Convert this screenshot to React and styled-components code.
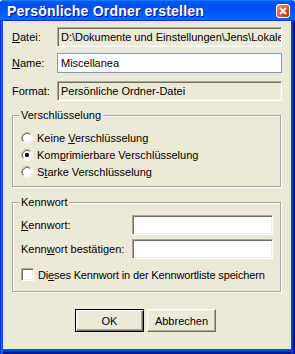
import React from 'react';
import styled, { createGlobalStyle } from 'styled-components';

const GlobalStyle = createGlobalStyle`
  html, body {
    margin: 0;
    padding: 0;
    background: #fff;
  }
  body {
    font-family: "Liberation Sans", Arial, sans-serif;
    font-size: 11px;
    color: #000;
  }
`;

const Window = styled.div`
  width: 295px;
  height: 354px;
  display: flex;
  flex-direction: column;
  overflow: hidden;
`;

const TitleBar = styled.div`
  flex: none;
  height: 21px;
  box-sizing: border-box;
  display: flex;
  align-items: center;
  justify-content: space-between;
  padding: 0 5px 0 7px;
  border-radius: 3px 3px 0 0;
  background: linear-gradient(180deg, #0997ff, #0053ee 8%, #0050ee 40%, #0066ff 88%, #0066ff 93%, #005bff 95%, #003dd7 96%, #003dd7);
`;

const Title = styled.span`
  font-family: "Liberation Sans", Arial, sans-serif;
  font-weight: bold;
  font-size: 14px;
  letter-spacing: 0.2px;
  color: #fff;
  text-shadow: 1px 1px #0f1089;
  margin-top: 1px;
`;

const CloseButton = styled.div`
  width: 14px;
  height: 14px;
  box-sizing: border-box;
  border: 1px solid #fff;
  border-radius: 3px;
  background: radial-gradient(circle at 85% 85%, #c2350b 0, #dc5a2c 50%, #e8794f 75%, #f6b49a 100%);
  display: flex;
  align-items: center;
  justify-content: center;
`;

const Body = styled.div`
  flex: 1;
  background: #ece9d8;
  padding: 6px 9px 0 12px;
  display: flex;
  flex-direction: column;
  box-shadow:
    inset 1px 0 #0831d9, inset 2px 0 #166aee, inset 3px 0 #0855dd,
    inset -1px 0 #00138c, inset -2px 0 #001ea0, inset -3px 0 #003bda, inset -4px 0 #0046dc,
    inset 0 -1px #00138c, inset 0 -2px #001ea0, inset 0 -3px #003bda, inset 0 -4px #0046dc, inset 0 -5px #0055e5;
`;

const FieldRow = styled.div`
  display: grid;
  grid-template-columns: 45px 225px;
  align-items: center;
  margin-bottom: ${p => p.$gap || 0}px;
`;

const Label = styled.span`
  white-space: nowrap;
`;

const U = styled.span`
  text-decoration: underline;
`;

const Edit = styled.div`
  height: 20px;
  box-sizing: border-box;
  padding: 0 3px;
  display: flex;
  align-items: center;
  white-space: nowrap;
  overflow: hidden;
  background: ${p => (p.$readOnly ? '#ece9d8' : '#fff')};
  border: 1px solid;
  border-color: #aca899 #fff #fff #aca899;
  box-shadow: inset 1px 1px #716f64, inset -1px -1px #f1efe2;
`;

const FlatEdit = styled.div`
  height: 20px;
  box-sizing: border-box;
  padding: 0 3px;
  display: flex;
  align-items: center;
  background: #fff;
  border: 1px solid #7f9db9;
`;

const Group = styled.div`
  position: relative;
  width: 269px;
  box-sizing: border-box;
  border: 1px solid #aca899;
  box-shadow: inset 1px 1px #fff, 1px 1px #fff;
  padding: ${p => p.$pad};
  margin-top: ${p => p.$top}px;
  display: flex;
  flex-direction: column;
`;

const Legend = styled.span`
  position: absolute;
  top: -7px;
  left: 6px;
  padding: 0 2px;
  background: #ece9d8;
  line-height: 13px;
`;

const OptionRow = styled.label`
  height: 17px;
  display: flex;
  align-items: center;
  gap: 4px;
  white-space: nowrap;
`;

const OptionText = styled.span`
  letter-spacing: ${p => p.$tight ? '-0.15px' : '0'};
`;

const PassRow = styled.div`
  display: grid;
  grid-template-columns: 111px 141px;
  align-items: center;
  margin-bottom: ${p => p.$gap || 0}px;
`;

const CheckBox = styled.span`
  flex: none;
  width: 13px;
  height: 13px;
  box-sizing: border-box;
  background: #fff;
  border: 1px solid;
  border-color: #aca899 #fff #fff #aca899;
  box-shadow: inset 1px 1px #716f64, inset -1px -1px #f1efe2;
`;

const ButtonRow = styled.div`
  display: flex;
  gap: 3px;
  margin-top: 17px;
  padding-left: 63px;
`;

const Button = styled.button`
  width: 69px;
  height: 23px;
  box-sizing: border-box;
  padding: 0;
  font: 11px "Liberation Sans", Arial, sans-serif;
  color: #000;
  background: #ece9d8;
  border: 1px solid;
  border-color: ${p => (p.$default ? '#000' : '#fff #716f64 #716f64 #fff')};
  box-shadow: ${p => (p.$default
    ? 'inset 1px 1px #fff, inset -1px -1px #716f64, inset -2px -2px #aca899'
    : 'inset -1px -1px #aca899, inset 1px 1px #f1efe2')};
`;

const Radio = ({ checked }) => (
  <svg width="12" height="12" viewBox="0 0 12 12" style={{ flex: 'none' }}>
    <circle cx="6" cy="6" r="5" fill="#fff" />
    <path d="M2.11 9.89 A5.5 5.5 0 0 1 9.89 2.11" fill="none" stroke="#aca899" />
    <path d="M9.89 2.11 A5.5 5.5 0 0 1 2.11 9.89" fill="none" stroke="#fff" />
    <path d="M2.82 9.18 A4.5 4.5 0 0 1 9.18 2.82" fill="none" stroke="#716f64" />
    <path d="M9.18 2.82 A4.5 4.5 0 0 1 2.82 9.18" fill="none" stroke="#f1efe2" />
    {checked && <rect x="4" y="4" width="4" height="4" rx="1.5" fill="#000" />}
  </svg>
);

const App = () => (
  <Window>
    <GlobalStyle />
    <TitleBar>
      <Title>Persönliche Ordner erstellen</Title>
      <CloseButton>
        <svg width="8" height="8" viewBox="0 0 8 8">
          <path d="M1 1 L7 7 M7 1 L1 7" stroke="#fff" strokeWidth="1.8" />
        </svg>
      </CloseButton>
    </TitleBar>
    <Body>
      <FieldRow $gap={6}>
        <Label><U>D</U>atei:</Label>
        <Edit $readOnly>D:\Dokumente und Einstellungen\Jens\Lokale</Edit>
      </FieldRow>
      <FieldRow $gap={8}>
        <Label><U>N</U>ame:</Label>
        <FlatEdit>Miscellanea</FlatEdit>
      </FieldRow>
      <FieldRow>
        <Label>Format:</Label>
        <Edit $readOnly>Persönliche Ordner-Datei</Edit>
      </FieldRow>

      <Group $top={14} $pad="13px 0 6px 8px">
        <Legend>Verschlüsselung</Legend>
        <OptionRow><Radio /><OptionText>Keine <U>V</U>erschlüsselung</OptionText></OptionRow>
        <OptionRow><Radio checked /><OptionText>Kom<U>p</U>rimierbare Verschlüsselung</OptionText></OptionRow>
        <OptionRow><Radio /><OptionText>S<U>t</U>arke Verschlüsselung</OptionText></OptionRow>
      </Group>

      <Group $top={15} $pad="12px 0 8px 8px">
        <Legend>Kennwort</Legend>
        <PassRow $gap={4}>
          <Label><U>K</U>ennwort:</Label>
          <Edit />
        </PassRow>
        <PassRow $gap={7}>
          <Label>Kenn<U>w</U>ort bestätigen:</Label>
          <Edit />
        </PassRow>
        <OptionRow>
          <CheckBox />
          <OptionText $tight>Di<U>e</U>ses Kennwort in der Kennwortliste speichern</OptionText>
        </OptionRow>
      </Group>

      <ButtonRow>
        <Button $default>OK</Button>
        <Button>Abbrechen</Button>
      </ButtonRow>
    </Body>
  </Window>
);

export default App;
